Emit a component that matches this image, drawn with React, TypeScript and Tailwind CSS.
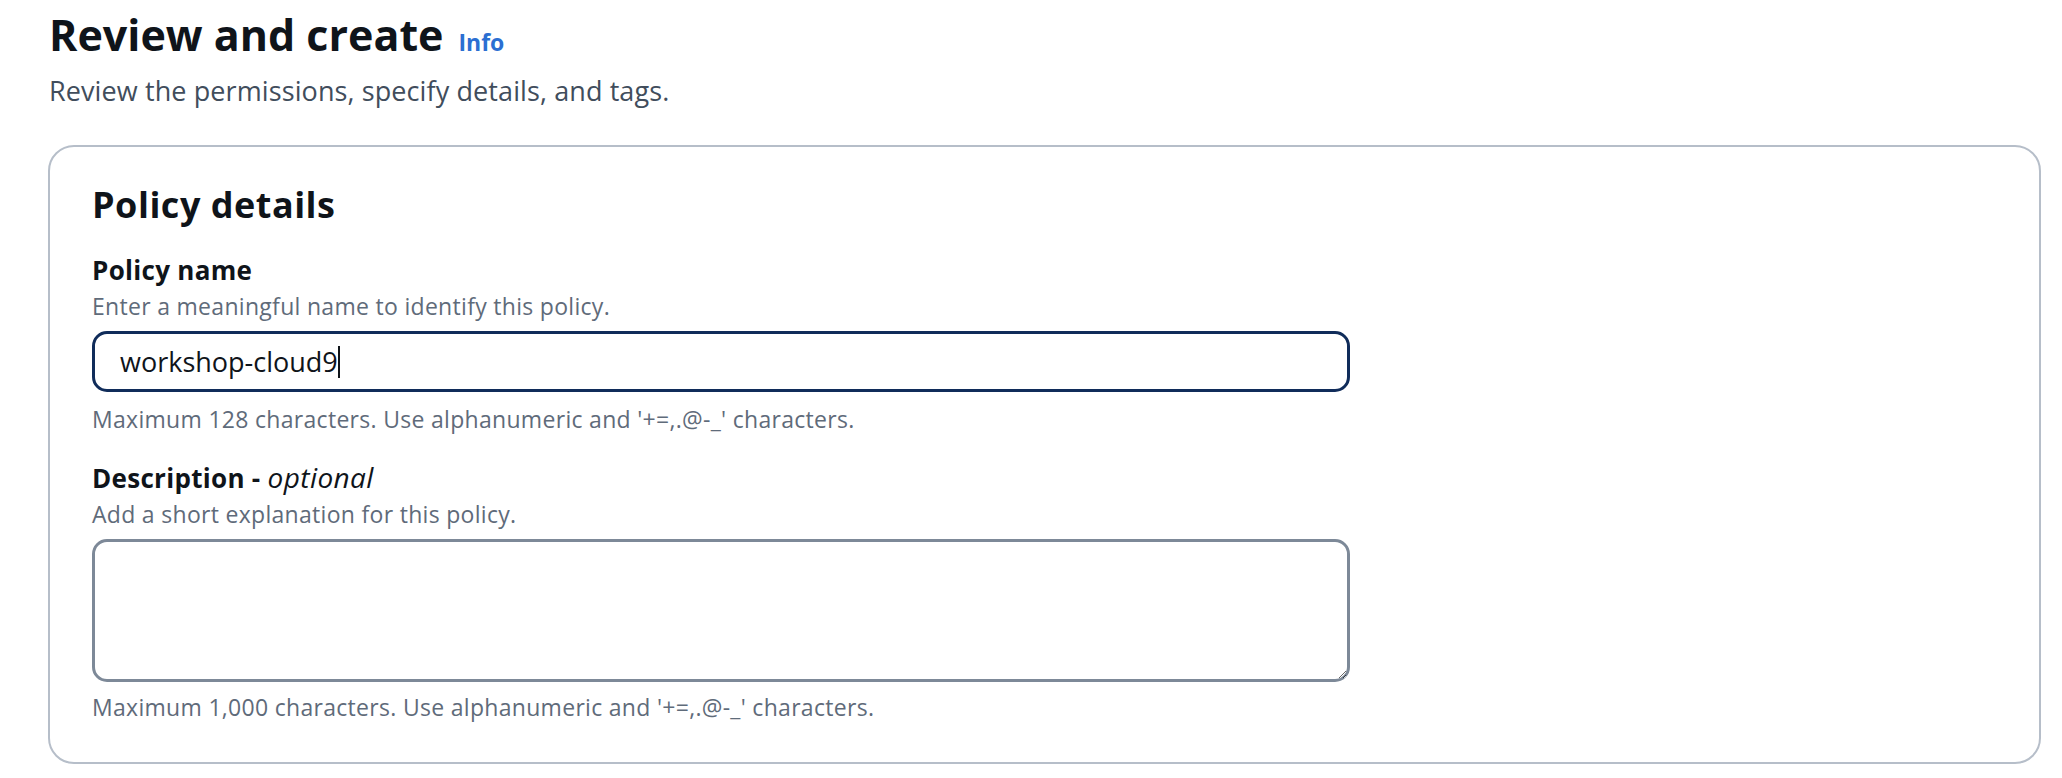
import React from "react";

const font = { fontFamily: '"Open Sans", "Liberation Sans", sans-serif' };

type FieldProps = {
  label: React.ReactNode;
  description: string;
  constraint: string;
  children: React.ReactNode;
  className?: string;
};

const Field = ({ label, description, constraint, children, className }: FieldProps) => {
  return (
    <div className={`flex flex-col ${className ?? ""}`}>
      <span className="text-[26px] leading-[32px] font-bold tracking-[0.3px] text-[#0f141a]">{label}</span>
      <span className="mt-[6px] text-[23px] leading-[28px] tracking-[0.3px] text-[#5f6b7a]">{description}</span>
      {children}
      <span className="text-[23px] leading-[28px] tracking-[0.3px] text-[#5f6b7a]">{constraint}</span>
    </div>
  );
};

export default function App() {
  return (
    <div className="min-h-screen bg-white pt-[9px] pl-[48px] pr-[21px]" style={font}>
      <div className="flex items-baseline gap-[15px] pl-[1px]">
        <h1 className="text-[43px] leading-[52px] font-bold text-[#0f141a]">Review and create</h1>
        <a href="#" className="text-[23px] leading-[28px] font-bold text-[#2b6fd2]">
          Info
        </a>
      </div>
      <p className="mt-[13px] pl-[1px] text-[27px] leading-[34px] tracking-[0.1px] text-[#414d5c]">
        Review the permissions, specify details, and tags.
      </p>

      <div className="mt-[37px] rounded-[26px] border-2 border-[#b6bec9] px-[42px] pt-[36px] pb-[41px]">
        <h2 className="text-[36px] leading-[44px] font-bold tracking-[0.5px] text-[#0f141a]">Policy details</h2>

        <Field
          className="mt-[27px]"
          label="Policy name"
          description="Enter a meaningful name to identify this policy."
          constraint="Maximum 128 characters. Use alphanumeric and '+=,.@-_' characters."
        >
          <div className="mt-[11px] mb-[13px] flex h-[61px] w-[1258px] items-center rounded-[15px] border-[3px] border-[#102c5a] px-[25px]">
            <span className="text-[27px] leading-[36px] text-[#0f141a]">workshop-cloud9</span>
            <span className="h-[32px] w-[2px] bg-[#0f141a]" />
          </div>
        </Field>

        <Field
          className="mt-[28px]"
          label={
            <>
              Description - <i className="text-[28px] font-normal tracking-[0.4px]">optional</i>
            </>
          }
          description="Add a short explanation for this policy."
          constraint="Maximum 1,000 characters. Use alphanumeric and '+=,.@-_' characters."
        >
          <textarea
            readOnly
            className="mt-[11px] mb-[11px] block h-[143px] w-[1258px] resize-y rounded-[15px] border-[3px] border-[#7d8998] bg-white px-[25px] py-[12px] text-[27px] outline-none"
          />
        </Field>
      </div>
    </div>
  );
}
